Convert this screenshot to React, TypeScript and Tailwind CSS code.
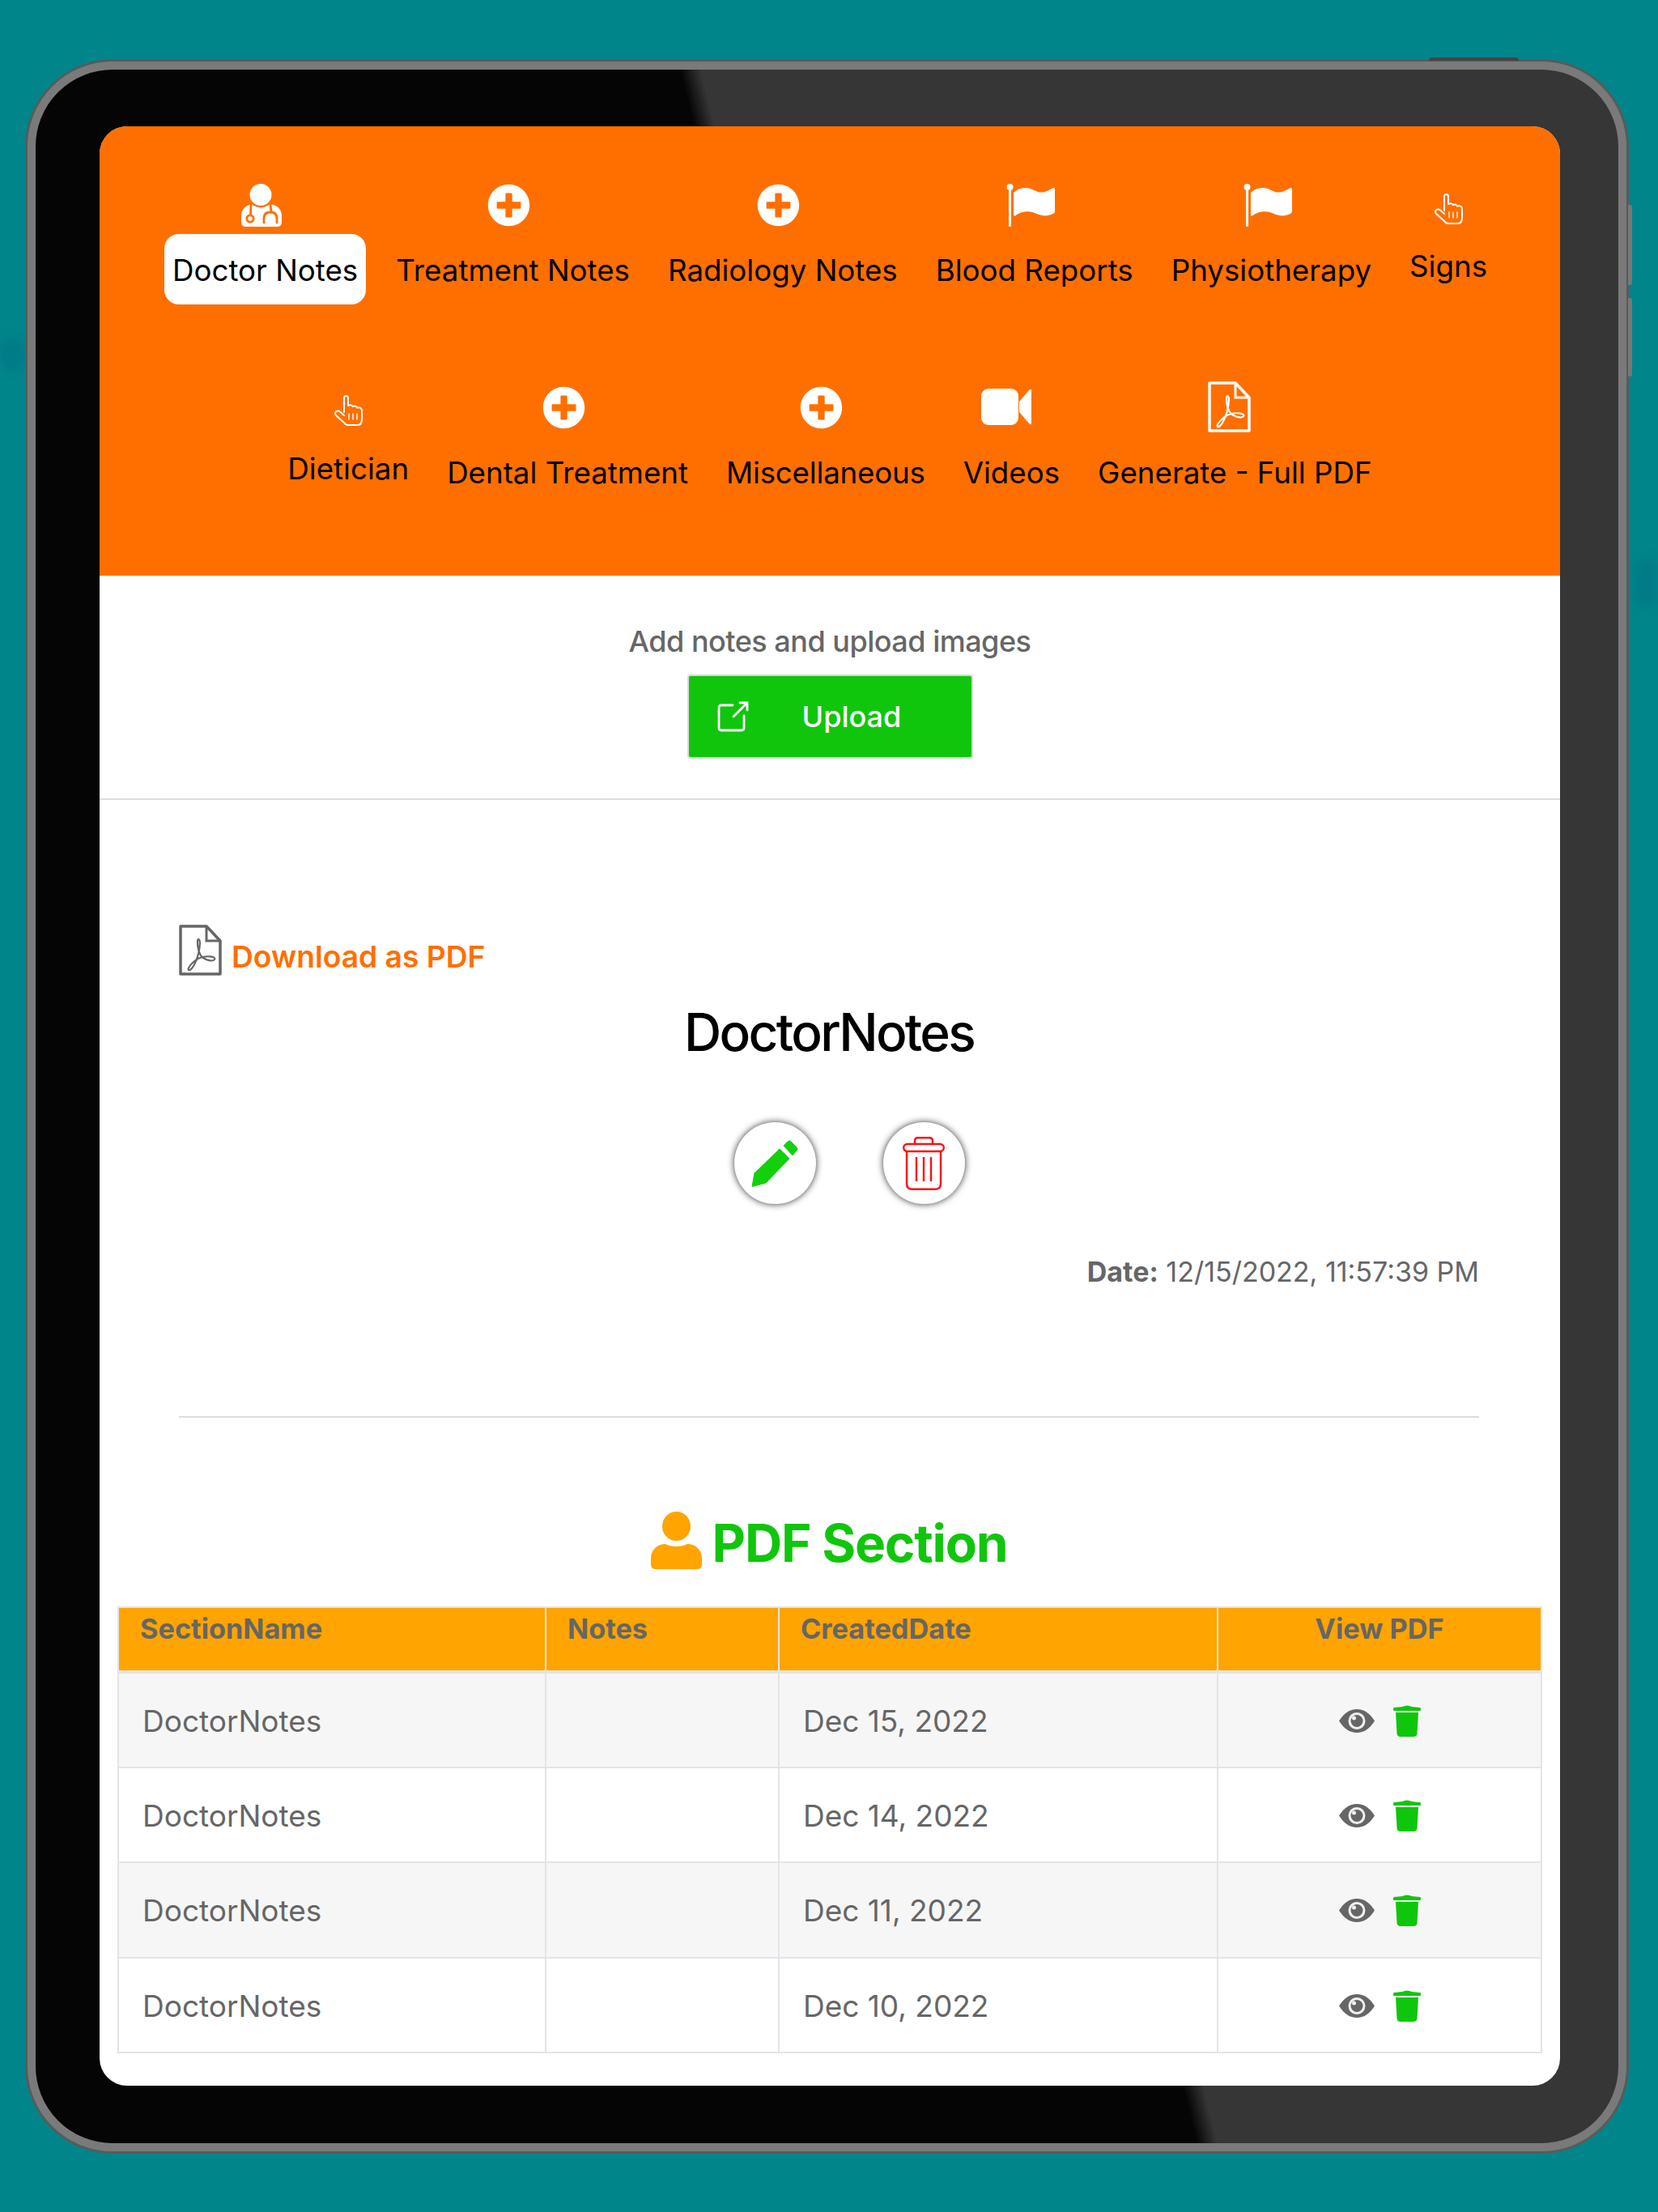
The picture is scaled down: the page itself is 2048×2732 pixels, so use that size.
import type { ReactNode } from "react";
import { FaPlusCircle } from "react-icons/fa";

function DoctorIcon() {
  return (
    <svg width="50" height="53" viewBox="0 0 50 53">
      <path d="M10 26 C14 25 36 25 40 26 C46 28 50 33 50 40 V47 Q50 53 44 53 H6 Q0 53 0 47 V40 C0 33 4 28 10 26 Z" fill="#fff" />
      <circle cx="24" cy="13.500" r="16" fill="#ff6f00" />
      <circle cx="24" cy="13.500" r="13.500" fill="#fff" />
      <g fill="none" stroke="#ff6f00" strokeWidth="2.800" strokeLinecap="round">
        <path d="M12 25 L11.500 38" />
        <circle cx="11" cy="43" r="4.200" fill="#fff" />
        <path d="M36 25 L37 35" />
        <path d="M28 48 V43 Q28 35 36 35 Q44 35 44 43 V48" />
      </g>
    </svg>
  );
}

function HandIcon() {
  return (
    <svg width="37" height="38" viewBox="0 0 37 38" fill="none" stroke="#fff" strokeWidth="2" strokeLinejoin="round" strokeLinecap="round">
      <path d="M13 21 V4 Q13 1 15.500 1 Q18 1 18 4 V13 C20 12 23 12 23.500 14 C26 13 28 13.500 29 15.500 C32 14.500 35 16 35 19 V29 C35 33 34 37 30 37 H18 Q15 37 13.500 34.500 L3 25 Q1 22.500 3 20.500 Q5.500 18.500 8 20.500 L13 25" />
      <path d="M19 23 V30 M24 23 V30 M29 23 V30" strokeWidth="1.400" />
    </svg>
  );
}

function FlagIcon() {
  return (
    <svg width="61" height="53" viewBox="0 0 61 53" fill="#fff">
      <rect x="3" y="4" width="3" height="49" rx="1.5" />
      <circle cx="4.5" cy="4" r="4" />
      <path d="M9 11 C14 6 22 4 28 5.5 C34 7 38 11 44 10.5 C50 10 54 7 58 5 Q60 4.5 60 7 V34 Q60 36 58 37 C52 40 46 40 40 38 C34 35 26 33 20 35 C16 36 13 38 11 39.5 Q9 40.5 9 38 Z" />
    </svg>
  );
}

function VideoIcon() {
  return (
    <svg width="62" height="45" viewBox="0 0 62 45" fill="#fff">
      <rect x="0" y="0" width="46" height="45" rx="9" />
      <path d="M47 16 L59 2 Q62 -1 62 3 V42 Q62 46 59 43 L47 29 Z" />
    </svg>
  );
}

function PdfIcon({ color }: { color: string }) {
  return (
    <svg width="53" height="63" viewBox="0 0 53 63" fill="none" stroke={color}>
      <path d="M2 2 H34 L51 20 V61 H2 Z" strokeWidth="3.5" strokeLinejoin="round" />
      <path d="M34 2 V20 H51" strokeWidth="3" />
      <path
        d="M24 18 C22 18 23 32 27 38 C31 44 42 46 44 43 C46 39 34 38 26 41 C18 44 10 54 12 56 C15 58 22 46 24 36 C26 28 27 18 24 18 Z"
        strokeWidth="2.200"
      />
    </svg>
  );
}

function UploadIcon() {
  return (
    <svg width="40" height="38" viewBox="0 0 40 38" fill="none" stroke="#fff" strokeWidth="2.800" strokeLinecap="round">
      <path d="M20 5 H6 Q3 5 3 8 V33 Q3 36 6 36 H31 Q34 36 34 33 V18" />
      <path d="M21 19 L38 2 M29 2 H38 V11" />
    </svg>
  );
}

function PencilIcon() {
  return (
    <svg width="59" height="58" viewBox="0 0 59 58" fill="#14cf0c" stroke="#14cf0c" strokeWidth="1" strokeLinejoin="round">
      <path d="M35 11 L47 23 L18 53 L1 57.5 L4 41 Z" />
      <path d="M40 7 L45 2 Q47 0 49 2 L56 9 Q58 11 56 13 L51 19 Z" />
    </svg>
  );
}

function TrashOutline() {
  return (
    <svg width="52" height="66" viewBox="0 0 52 66" fill="none" stroke="#ff0f0f" strokeWidth="2.400">
      <rect x="1.200" y="9" width="49.600" height="9" rx="4.500" />
      <path d="M15 9 V5 Q15 1.200 19 1.200 H33 Q37 1.200 37 5 V9" />
      <path d="M5 18 V58 Q5 64.800 12 64.800 H40 Q47 64.800 47 58 V18" />
      <path d="M17 25 V55 M26 25 V55 M35 25 V55" />
    </svg>
  );
}

function TrashFilled() {
  return (
    <svg width="34" height="39" viewBox="0 0 34 39" fill="#10c60c">
      <path d="M11 2 Q17 -1 23 2 L33 3 Q34 3 34 5 V6 Q34 7 33 7 H1 Q0 7 0 6 V5 Q0 3 1 3 Z" />
      <path d="M3 9 H31 L29.5 35 Q29 39 25 39 H9 Q5 39 4.500 35 Z" />
    </svg>
  );
}

function EyeIcon() {
  return (
    <svg width="44" height="29" viewBox="0 0 44 29">
      <path d="M0 14.500 C6 5 13 0 22 0 C31 0 38 5 44 14.500 C38 24 31 29 22 29 C13 29 6 24 0 14.500 Z" fill="#666" />
      <circle cx="22" cy="14.500" r="10.500" fill="#f0f0f0" />
      <circle cx="22" cy="14.500" r="7.500" fill="#666" />
      <circle cx="18.500" cy="11" r="2.500" fill="#f0f0f0" />
    </svg>
  );
}

function PersonIcon() {
  return (
    <svg width="63" height="71" viewBox="0 0 63 71" fill="#ffa400">
      <ellipse cx="31.500" cy="18" rx="17.500" ry="18" />
      <path d="M0 65 V58 C0 47 8 40 18 40 C24 44 38 44 45 40 C55 40 63 47 63 58 V65 Q63 71 57 71 H6 Q0 71 0 65 Z" />
    </svg>
  );
}

type Tab = { label: string; icon: ReactNode; iconClass: string; labelClass?: string; active?: boolean };

const plus = <FaPlusCircle size={53} color="#fff" />;

const tabs: Tab[] = [
  { label: "Doctor Notes", icon: <DoctorIcon />, iconClass: "pr-[10px]", active: true },
  { label: "Treatment Notes", icon: plus, iconClass: "pr-[10px]" },
  { label: "Radiology Notes", icon: plus, iconClass: "pr-[10px]" },
  { label: "Blood Reports", icon: <FlagIcon />, iconClass: "pr-[8px]" },
  { label: "Physiotherapy", icon: <FlagIcon />, iconClass: "pr-[8px]" },
  { label: "Signs", icon: <HandIcon />, iconClass: "pt-[12px]", labelClass: "-mt-[5px]" },
  { label: "Dietician", icon: <HandIcon />, iconClass: "pt-[11px]", labelClass: "-mt-[5px]" },
  { label: "Dental Treatment", icon: plus, iconClass: "pr-[10px]" },
  { label: "Miscellaneous", icon: plus, iconClass: "pr-[10px]", labelClass: "tracking-[-0.2px]" },
  { label: "Videos", icon: <VideoIcon />, iconClass: "pt-[3px] pr-[12px]" },
  { label: "Generate - Full PDF", icon: <PdfIcon color="#fff" />, iconClass: "-mt-[6px] pr-[14px]", labelClass: "mt-[6px]" },
];

const rows = ["Dec 15, 2022", "Dec 14, 2022", "Dec 11, 2022", "Dec 10, 2022"];

export default function App() {
  return (
    <div className="relative w-[2048px] h-[2732px] bg-[#00858a] pt-[76px] pl-[34px] overflow-hidden font-['Inter',sans-serif]">
      {/* faint marks in the wallpaper */}
      <div className="absolute left-0 top-[418px] w-[30px] h-[40px] rounded-full bg-[#007b88] blur-[5px]" />
      <div className="absolute right-0 top-[690px] w-[30px] h-[60px] rounded-full bg-[#007b88] blur-[6px]" />

      <div className="relative w-[1975px] h-[2581px] rounded-[105px] border-[10px] border-[#7a7a7a] pt-[70px] pl-[79px] bg-[linear-gradient(76deg,#050505_55.3%,#363636_56.3%)] shadow-[0_0_0_3px_#5a5a5a]">
        {/* side and top hardware buttons */}
        <div className="absolute -top-[15px] left-[1721px] w-[111px] h-[4px] rounded-t bg-[#444]" />
        <div className="absolute top-[167px] -right-[17px] w-[5px] h-[99px] rounded-r-[3px] bg-[#777]" />
        <div className="absolute top-[282px] -right-[17px] w-[5px] h-[97px] rounded-r-[3px] bg-[#777]" />

        <div className="w-[1804px] h-[2420px] rounded-[34px] overflow-hidden bg-white">
          <div className="h-[555px] bg-[#ff6f00] pt-[71px]">
            <div className="flex flex-wrap justify-center gap-x-[27px] gap-y-[101px]">
              {tabs.map((tab) => (
                <div key={tab.label} className="flex flex-col items-center">
                  <div className={`h-[62px] flex items-start justify-center ${tab.iconClass}`}>{tab.icon}</div>
                  <div
                    className={`h-[87px] pt-[3px] px-[10px] flex items-center rounded-[18px] text-[36.7px] leading-none text-black whitespace-nowrap ${
                      tab.active ? "bg-white" : ""
                    } ${tab.labelClass ?? ""}`}
                  >
                    {tab.label}
                  </div>
                </div>
              ))}
            </div>
          </div>

          <div className="h-[277px] border-b-2 border-[#dddddd] pt-[61px] flex flex-col items-center">
            <p className="text-[36px] leading-[40px] font-medium tracking-[-0.5px] text-[#666]">Add notes and upload images</p>
            <button className="mt-[21px] w-[353px] h-[104px] flex items-center pl-[34px] rounded-[4px] border-2 border-[#d8d8d8] bg-[#10c60c]">
              <UploadIcon />
              <span className="ml-[66px] text-[36px] font-medium text-white">Upload</span>
            </button>
          </div>

          <div className="pl-[98px] pr-[100px] pt-[154px]">
            <div className="flex items-end gap-[12px]">
              <PdfIcon color="#666" />
              <span className="text-[37.2px] leading-[46px] font-semibold text-[#ff6f00]">Download as PDF</span>
            </div>
            <h1 className="mt-[38px] text-center text-[64px] leading-[64px] font-[550] tracking-[-2.7px] text-black">DoctorNotes</h1>
            <div className="mt-[79px] pl-[50px] flex justify-center gap-[83px]">
              <button className="w-[101px] h-[101px] rounded-full bg-white flex items-center justify-center shadow-[0_0_8px_rgba(0,0,0,0.8)]">
                <PencilIcon />
              </button>
              <button className="w-[101px] h-[101px] rounded-full bg-white flex items-center justify-center shadow-[0_0_8px_rgba(0,0,0,0.8)]">
                <TrashOutline />
              </button>
            </div>
            <p className="mt-[64px] text-right text-[34px] leading-[40px] text-[#666]">
              <b className="font-bold">Date:</b> 12/15/2022, 11:57:39 PM
            </p>
            <div className="mt-[158px] h-[2px] bg-[#dddddd]" />
            <div className="mt-[116px] flex justify-center gap-[13px]">
              <PersonIcon />
              <h2 className="mt-[3px] text-[64px] leading-[72px] font-bold tracking-[-1.2px] text-[#10c60c]">PDF Section</h2>
            </div>
          </div>

          <div className="pl-[22px] mt-[42px]">
            <table className="w-[1758px] table-fixed border-collapse text-[#666]">
              <colgroup>
                <col className="w-[528px]" />
                <col className="w-[288px]" />
                <col className="w-[542px]" />
                <col className="w-[400px]" />
              </colgroup>
              <thead>
                <tr className="h-[80px] bg-[#ffa400] text-[34.3px] leading-[40px] font-bold">
                  <th className="border-2 border-b-4 border-[#e2e4e8] align-top pt-[6px] pl-[26px] text-left">SectionName</th>
                  <th className="border-2 border-b-4 border-[#e2e4e8] align-top pt-[6px] pl-[26px] text-left">Notes</th>
                  <th className="border-2 border-b-4 border-[#e2e4e8] align-top pt-[6px] pl-[26px] text-left">CreatedDate</th>
                  <th className="border-2 border-b-4 border-[#e2e4e8] align-top pt-[6px] text-center">View PDF</th>
                </tr>
              </thead>
              <tbody>
                {rows.map((date, i) => (
                  <tr key={date} className={`h-[117.5px] text-[37px] ${i % 2 === 0 ? "bg-[#f6f6f6]" : "bg-white"}`}>
                    <td className="border-2 border-[#e2e4e8] pl-[29px] pt-[2px]">DoctorNotes</td>
                    <td className="border-2 border-[#e2e4e8]" />
                    <td className="border-2 border-[#e2e4e8] pl-[29px] pt-[2px]">{date}</td>
                    <td className="border-2 border-[#e2e4e8] pt-[2px]">
                      <div className="flex items-center justify-center gap-[23px]">
                        <EyeIcon />
                        <TrashFilled />
                      </div>
                    </td>
                  </tr>
                ))}
              </tbody>
            </table>
          </div>
        </div>
      </div>
    </div>
  );
}
